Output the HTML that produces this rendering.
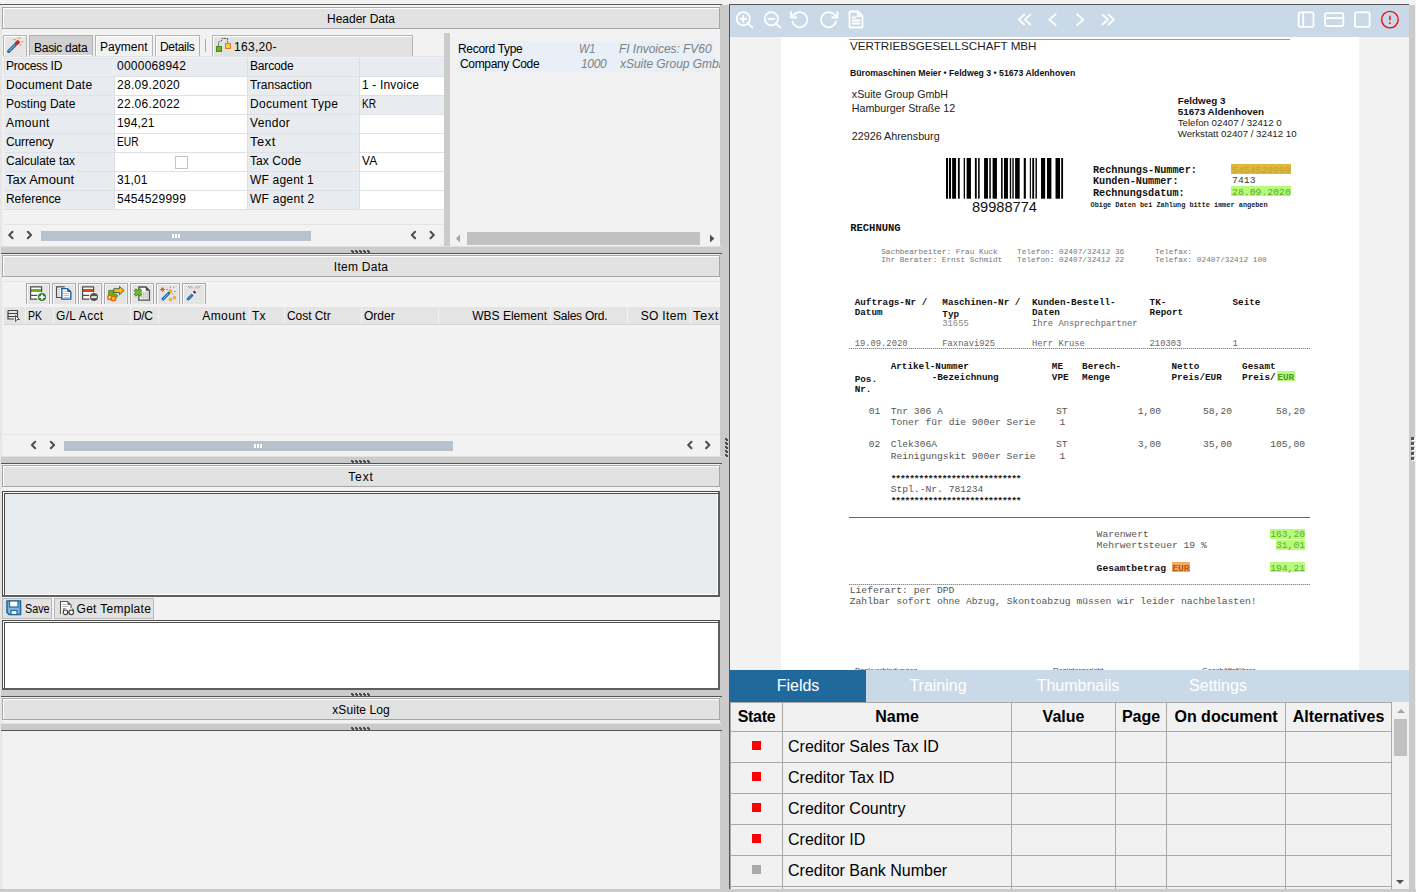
<!DOCTYPE html>
<html><head><meta charset="utf-8">
<style>
*{box-sizing:border-box;margin:0;padding:0}
html,body{width:1416px;height:892px;overflow:hidden;background:#f2f2f2;font-family:"Liberation Sans",sans-serif;font-size:12px;color:#000}
.a{position:absolute}
.t{position:absolute;white-space:pre;line-height:14px;height:14px;letter-spacing:.2px}
.hdr{position:absolute;left:2px;width:718px;height:22px;background:#e2e2e2;border:1px solid #a6a6a6;box-shadow:inset 1px 1px 0 #fff;text-align:center;line-height:21px;padding-top:1px;letter-spacing:.2px}
.split{position:absolute;left:1px;width:721px;height:8px;background:#cbcbcb;border-bottom:1px solid #555;box-shadow:0 -1px 0 #e0e0e0}
.grip{position:absolute;left:350px;bottom:0;width:20px;height:3px;background:linear-gradient(#555,#555) 0 0/2px 2px no-repeat,linear-gradient(#555,#555) 1px 1px/2px 2px no-repeat;background-size:auto}.grip i{position:absolute;top:0;width:3px;height:3px;background:linear-gradient(#4e4e4e,#4e4e4e) 0 0/2px 2px no-repeat,linear-gradient(#4e4e4e,#4e4e4e) 1px 1px/2px 2px no-repeat}
.tab{position:absolute;top:35px;height:21px;background:#f2f2f2;border:1px solid #b4b4b4;border-bottom:none;box-shadow:inset 1px 1px 0 #fff}
.lc{position:absolute;background:#e8ecf0;height:18px}
.vc{position:absolute;background:#fff;height:18px}
.ch{position:absolute;top:307px;height:17px;background:#e4e4e4;line-height:18px;white-space:pre;letter-spacing:.2px}
.tb{position:absolute;top:283px;width:22px;height:21px;border:1px solid #a9a9a9;border-bottom:none;background:#e4e4e4;box-shadow:inset 1px 1px 0 #fafafa,inset -1px 0 0 #f0f0f0}
.doc{position:absolute;white-space:pre;color:#222}
.mono{font-family:"Liberation Mono",monospace}
.ser{font-family:"Liberation Serif",serif}
.vd{position:absolute;left:725px;width:3px;height:3px;background:linear-gradient(#4e4e4e,#4e4e4e) 0 0/2px 2px no-repeat,linear-gradient(#4e4e4e,#4e4e4e) 1px 1px/2px 2px no-repeat}
.rd{position:absolute;left:681px;width:3px;height:3px;background:#555;box-shadow:1px 1px 0 #fff}
.it{font-style:italic;color:#808080}
.ft{position:absolute;font-size:16px;line-height:18px;white-space:pre}
</style></head><body>
<!-- ===== LEFT PANEL ===== -->
<div class="a" id="left" style="left:0;top:0;width:730px;height:892px;background:#f2f2f2;overflow:hidden">
 <div class="a" style="left:0;top:4px;width:722px;height:1px;background:#5a5a5a"></div>
 <div class="a" style="left:0;top:5px;width:3px;height:884px;background:linear-gradient(90deg,#e6e6e6 0 2px,#eeeeee 2px 3px)"></div>
 <div class="a" style="left:720px;top:5px;width:9px;height:887px;background:#cbcbcb"></div>
 <!-- SECTION: header data -->
 <div class="hdr" style="top:7px;letter-spacing:0">Header Data</div>
 <div class="tab" style="left:3px;width:24px;background:#e6e6e6"></div>
<svg class="a" style="left:4px;top:36px" width="22" height="19" viewBox="4 36 22 19"><path d="M8.700 51.300L15.200 44.800" stroke="#1d5f8f" stroke-width="3.300" stroke-linecap="round"/><path d="M9 51L14.800 45.200" stroke="#7fb0d8" stroke-width="1.100" stroke-linecap="round"/><path d="M15.900 44.100L19 41" stroke="#d4121f" stroke-width="3.500"/><path d="M17.200 42.300l.8-.8" stroke="#f08080" stroke-width="1"/><path d="M13.200 39.600h2.600M18.800 38.700l1.700-1.700M21 41.700h2.200M20.100 43.800l.5 2M17.300 38.600v-.9" stroke="#f5a800" stroke-width="1.200"/></svg>
<div class="tab" style="left:29px;width:64px;background:#d0d0d0;border-color:#b0b0b0;box-shadow:none"></div>
<div class="a" style="left:30px;top:55px;width:62px;height:1px;background:#fff"></div>
<div class="t" style="left:34px;top:41px;letter-spacing:-0.275px;">Basic data</div>
<div class="tab" style="left:95px;width:58px"></div>
<div class="t" style="left:100px;top:40px;letter-spacing:0.049px;">Payment</div>
<div class="tab" style="left:155px;width:45px"></div>
<div class="t" style="left:160px;top:40px;letter-spacing:-0.312px;">Details</div>
<div class="a" style="left:205px;top:39px;width:1px;height:13px;background:#a8a8a8"></div>
<div class="tab" style="left:212px;width:201px;background:#e2e2e2"></div>
<svg class="a" style="left:214px;top:36px" width="20" height="18" viewBox="214 36 20 18"><path d="M218.500 45.500V42.200L222 40.300V38.500H227.500V42.500" fill="none" stroke="#555" stroke-width="1" stroke-dasharray="2 .8"/><rect x="216.500" y="46.500" width="5" height="5" fill="#6cb320" stroke="#3d8a1d"/><rect x="225.500" y="43.500" width="5" height="5" fill="#ffc933" stroke="#e8791c"/></svg>
<div class="t" style="left:234px;top:40px;letter-spacing:0.314px;">163,20-</div>
<div class="a" style="left:3px;top:56px;width:441px;height:1px;background:#e2e2e2"></div>
<div class="lc" style="left:4px;top:58px;width:111px"></div>
<div class="vc" style="left:115px;top:58px;width:132px;background:#e8ecf0"></div>
<div class="lc" style="left:248px;top:58px;width:111px"></div>
<div class="vc" style="left:360px;top:58px;width:84px;background:#e8ecf0"></div>
<div class="t" style="left:6px;top:59px;letter-spacing:-0.259px;">Process ID</div>
<div class="t" style="left:117px;top:59px;letter-spacing:0.245px;">0000068942</div>
<div class="t" style="left:250px;top:59px;letter-spacing:-0.172px;">Barcode</div>
<div class="lc" style="left:4px;top:77px;width:111px"></div>
<div class="vc" style="left:115px;top:77px;width:132px;background:#fff"></div>
<div class="lc" style="left:248px;top:77px;width:111px"></div>
<div class="vc" style="left:360px;top:77px;width:84px;background:#fff"></div>
<div class="t" style="left:6px;top:78px;letter-spacing:0.225px;">Document Date</div>
<div class="t" style="left:117px;top:78px;letter-spacing:0.304px;">28.09.2020</div>
<div class="t" style="left:250px;top:78px;letter-spacing:-0.023px;">Transaction</div>
<div class="t" style="left:362px;top:78px;letter-spacing:0.167px;">1 - Invoice</div>
<div class="lc" style="left:4px;top:96px;width:111px"></div>
<div class="vc" style="left:115px;top:96px;width:132px;background:#fff"></div>
<div class="lc" style="left:248px;top:96px;width:111px"></div>
<div class="vc" style="left:360px;top:96px;width:84px;background:#e8ecf0"></div>
<div class="t" style="left:6px;top:97px;letter-spacing:0.065px;">Posting Date</div>
<div class="t" style="left:117px;top:97px;letter-spacing:0.304px;">22.06.2022</div>
<div class="t" style="left:250px;top:97px;letter-spacing:0.344px;">Document Type</div>
<div class="t" style="left:362px;top:97px;letter-spacing:0;transform-origin:0 50%;transform:scaleX(0.840);">KR</div>
<div class="lc" style="left:4px;top:115px;width:111px"></div>
<div class="vc" style="left:115px;top:115px;width:132px;background:#fff"></div>
<div class="lc" style="left:248px;top:115px;width:111px"></div>
<div class="vc" style="left:360px;top:115px;width:84px;background:#fff"></div>
<div class="t" style="left:6px;top:116px;letter-spacing:0.39px;">Amount</div>
<div class="t" style="left:117px;top:116px;letter-spacing:0.149px;">194,21</div>
<div class="t" style="left:250px;top:116px;letter-spacing:0.342px;">Vendor</div>
<div class="lc" style="left:4px;top:134px;width:111px"></div>
<div class="vc" style="left:115px;top:134px;width:132px;background:#fff"></div>
<div class="lc" style="left:248px;top:134px;width:111px"></div>
<div class="vc" style="left:360px;top:134px;width:84px;background:#fff"></div>
<div class="t" style="left:6px;top:135px;letter-spacing:-0.123px;">Currency</div>
<div class="t" style="left:117px;top:135px;letter-spacing:0;transform-origin:0 50%;transform:scaleX(0.852);">EUR</div>
<div class="t" style="left:250px;top:135px;letter-spacing:.5px;transform-origin:0 50%;transform:scaleX(1.08);">Text</div>
<div class="lc" style="left:4px;top:153px;width:111px"></div>
<div class="vc" style="left:115px;top:153px;width:132px;background:#fff"></div>
<div class="lc" style="left:248px;top:153px;width:111px"></div>
<div class="vc" style="left:360px;top:153px;width:84px;background:#fff"></div>
<div class="t" style="left:6px;top:154px;letter-spacing:-0.029px;">Calculate tax</div>
<div class="t" style="left:250px;top:154px;letter-spacing:0.075px;">Tax Code</div>
<div class="t" style="left:362px;top:154px;letter-spacing:0.138px;">VA</div>
<div class="lc" style="left:4px;top:172px;width:111px"></div>
<div class="vc" style="left:115px;top:172px;width:132px;background:#fff"></div>
<div class="lc" style="left:248px;top:172px;width:111px"></div>
<div class="vc" style="left:360px;top:172px;width:84px;background:#fff"></div>
<div class="t" style="left:6px;top:173px;letter-spacing:0;transform-origin:0 50%;transform:scaleX(1.086);">Tax Amount</div>
<div class="t" style="left:117px;top:173px;letter-spacing:0.114px;">31,01</div>
<div class="t" style="left:250px;top:173px;letter-spacing:0.187px;">WF agent 1</div>
<div class="lc" style="left:4px;top:191px;width:111px"></div>
<div class="vc" style="left:115px;top:191px;width:132px;background:#fff"></div>
<div class="lc" style="left:248px;top:191px;width:111px"></div>
<div class="vc" style="left:360px;top:191px;width:84px;background:#fff"></div>
<div class="t" style="left:6px;top:192px;letter-spacing:-0.042px;">Reference</div>
<div class="t" style="left:117px;top:192px;letter-spacing:0.245px;">5454529999</div>
<div class="t" style="left:250px;top:192px;letter-spacing:0.247px;">WF agent 2</div>
<div class="a" style="left:4px;top:58px;width:110px;height:18px;border:1px solid #f0f2f4;border-top-color:#dfe3e8;border-left-color:#dfe3e8"></div>
<div class="a" style="left:175px;top:156px;width:13px;height:13px;border:1px solid #c4c4c4;background:#fff"></div>
<div class="a" style="left:114px;top:77px;width:1px;height:132px;background:#dcdfe3"></div>
<div class="a" style="left:247px;top:58px;width:1px;height:151px;background:#dcdfe3"></div>
<div class="a" style="left:359px;top:58px;width:1px;height:151px;background:#dcdfe3"></div>
<div class="a" style="left:4px;top:76px;width:440px;height:1px;background:#dfe1e4"></div>
<div class="a" style="left:4px;top:95px;width:440px;height:1px;background:#dfe1e4"></div>
<div class="a" style="left:4px;top:114px;width:440px;height:1px;background:#dfe1e4"></div>
<div class="a" style="left:4px;top:133px;width:440px;height:1px;background:#dfe1e4"></div>
<div class="a" style="left:4px;top:152px;width:440px;height:1px;background:#dfe1e4"></div>
<div class="a" style="left:4px;top:171px;width:440px;height:1px;background:#dfe1e4"></div>
<div class="a" style="left:4px;top:190px;width:440px;height:1px;background:#dfe1e4"></div>
<div class="a" style="left:4px;top:209px;width:440px;height:1px;background:#dfe1e4"></div>
<div class="a" style="left:3px;top:224px;width:441px;height:1px;background:#e4e4e4"></div>
<div class="a" style="left:41px;top:231px;width:270px;height:10px;background:#b7c2cd"></div>
<div class="a" style="left:172px;top:234px;width:8px;height:4px;background:linear-gradient(90deg,#fff 0 2px,transparent 2px 3px,#fff 3px 5px,transparent 5px 6px,#fff 6px 8px)"></div>
<svg class="a" style="left:4px;top:229px" width="12" height="12" viewBox="4 229 12 12"><path d="M12.50 231.80L9.20 235L12.50 238.20" fill="none" stroke="#505050" stroke-width="2.1" stroke-linecap="round" stroke-linejoin="round"/></svg>
<svg class="a" style="left:23px;top:229px" width="12" height="12" viewBox="23 229 12 12"><path d="M27.80 231.80L31.10 235L27.80 238.20" fill="none" stroke="#505050" stroke-width="2.1" stroke-linecap="round" stroke-linejoin="round"/></svg>
<svg class="a" style="left:407px;top:229px" width="12" height="12" viewBox="407 229 12 12"><path d="M415.10 231.80L411.80 235L415.10 238.20" fill="none" stroke="#505050" stroke-width="2.1" stroke-linecap="round" stroke-linejoin="round"/></svg>
<svg class="a" style="left:426px;top:229px" width="12" height="12" viewBox="426 229 12 12"><path d="M430.50 231.80L433.80 235L430.50 238.20" fill="none" stroke="#505050" stroke-width="2.1" stroke-linecap="round" stroke-linejoin="round"/></svg>
<div class="a" style="left:444px;top:33px;width:6px;height:215px;background:#cbcbcb"></div>
<div class="a" style="left:458px;top:41px;width:256px;height:31px;background:#e8eff7"></div>
<div class="t" style="left:458px;top:42px;letter-spacing:-0.303px;">Record Type</div>
<div class="t" style="left:460px;top:57px;letter-spacing:-0.341px;">Company Code</div>
<div class="t it" style="left:579px;top:42px;letter-spacing:0;transform-origin:0 50%;transform:scaleX(0.906);">W1</div>
<div class="t it" style="left:619px;top:42px;letter-spacing:-0.051px;">FI Invoices: FV60</div>
<div class="t it" style="left:581px;top:57px;letter-spacing:-0.301px;">1000</div>
<div class="t it" style="left:620px;top:57px;width:100px;overflow:hidden;letter-spacing:-.05px">xSuite Group GmbH</div>
<div class="a" style="left:467px;top:232px;width:233px;height:13px;background:#c1c1c1"></div>
<svg class="a" style="left:454px;top:232px" width="264" height="13" viewBox="454 232 264 13"><path d="M456 238.400L460 234.400V242.400z" fill="#a3a3a3"/><path d="M714.400 238.400L710 234.400V242.400z" fill="#505050"/></svg>
 <!-- SECTION: item data -->
 <div class="split" style="top:247px;height:7px"><div class="grip" style="background:none"><i style="left:0"></i><i style="left:4px"></i><i style="left:8px"></i><i style="left:12px"></i><i style="left:16px"></i></div></div>
 <div class="hdr" style="top:255px;letter-spacing:.26px">Item Data</div>
 <div class="a" style="left:3px;top:281px;width:717px;height:1px;background:#e6e6e6"></div>
<div class="tb" style="left:26px;width:24px"></div>
<div class="tb" style="left:52px;width:24px"></div>
<div class="tb" style="left:78px;width:24px"></div>
<div class="tb" style="left:104px;width:24px"></div>
<div class="tb" style="left:130px;width:24px"></div>
<div class="tb" style="left:156px;width:24px"></div>
<div class="tb" style="left:182px;width:24px"></div>
<svg class="a" style="left:24px;top:282px" width="190" height="24" viewBox="24 282 190 24">
<rect x="30.6" y="286.9" width="11" height="12.200" fill="#fff"/><rect x="31" y="289" width="10.500" height="3" fill="#6cb320"/><path d="M42 286.900H30.6V299.100H37.5M30.6 295.300H37.5M41.6 286.900V293" fill="none" stroke="#4d4d4d" stroke-width="1.200"/><circle cx="42" cy="297.100" r="4.800" fill="#fff"/><circle cx="42" cy="297.100" r="4.100" fill="#2e7d32"/><path d="M39.3 297.100h5.400M42 294.400v5.400" stroke="#fff" stroke-width="1.700"/>
<path d="M64.800 286.900H56.600V297.500H61" fill="#fff" stroke="#4d4d4d" stroke-width="1.200"/><path d="M58 289.500h2M58 291.700h2M58 293.900h2M58 296h2" stroke="#aaa" stroke-width=".9"/>
<path d="M61.800 288.600h5.700l3.300 3.300v7.200h-9z" fill="#fff" stroke="#1a5f9a" stroke-width="1.400"/><path d="M67.300 288.400v3.700h3.700z" fill="#1a5f9a"/><path d="M63.500 291.500h3M63.500 293.500h5.500M63.500 295.500h5.500M63.500 297.500h5.500" stroke="#ffc107" stroke-width="1"/>
<rect x="82.6" y="286.9" width="11" height="12.200" fill="#fff"/><rect x="83" y="289" width="10.500" height="3" fill="#d9480f"/><path d="M94 286.900H82.6V299.100H89.5M82.6 295.300H89.5M93.6 286.900V293" fill="none" stroke="#4d4d4d" stroke-width="1.200"/><circle cx="94" cy="297.100" r="4.800" fill="#fff"/><circle cx="94" cy="297.100" r="4.100" fill="#555"/><path d="M91.3 297.100h5.400" stroke="#fff" stroke-width="1.700"/>
<path d="M108.700 290.500h4.500v3.500h3l1.800 1.800l-1.800 1.800h-7.500z" fill="#6cb320" stroke="#3f7d1c" stroke-width=".8"/>
<path d="M113.800 288.700h5.700v-2.300l4.600 4.200l-4.600 4.200v-2.300h-5.700z" fill="#ffc107" stroke="#3d4d5c" stroke-width=".9"/>
<circle cx="110" cy="297.400" r="2.300" fill="#ffd54f" stroke="#e8591c" stroke-width="1.100"/><circle cx="113.500" cy="298.500" r="2.400" fill="#ffc107" stroke="#e8591c" stroke-width="1.200"/>
<path d="M138.900 287h7l3.500 3.500v9.700h-10.500z" fill="#fff" stroke="#4d4d4d" stroke-width="1.300"/><path d="M145.700 286.800v4h4z" fill="#4d4d4d"/>
<path d="M141.500 292.200h6.500v6h-6.500zM143.700 292.200v6M145.900 292.200v6M141.500 294.200h6.500M141.500 296.200h6.500" fill="none" stroke="#bbb" stroke-width=".8"/>
<path d="M134.800 289.500l6.400 6M141.200 289.500l-6.400 6" stroke="#3f7d1c" stroke-width="3.200"/><path d="M135.200 289.900l5.600 5.200M140.800 289.900l-5.600 5.200" stroke="#7cc62a" stroke-width="1.700"/>
<path d="M163 299l5.800-5.800" stroke="#1a6fb0" stroke-width="3" stroke-linecap="round"/><path d="M163.300 298.700l5-5" stroke="#8ab8e0" stroke-width="1"/>
<path d="M169.400 292.200l2-2" stroke="#f08a1c" stroke-width="3.200"/><path d="M169.800 291.800l1.200-1.200" stroke="#ffd21a" stroke-width="1.600"/>
<path d="M160.200 289.500h4.600M162.500 287.200v4.600M160.900 287.900l3.200 3.200M164.100 287.900l-3.200 3.200" stroke="#e8591c" stroke-width=".9"/>
<path d="M170.500 286.300v1.500M173.300 288l1.200-1.200M174 291.500h1.600M166.300 289.500h1.600M172.600 293.500l.5 1.200" stroke="#777" stroke-width=".8"/>
<circle cx="170.500" cy="299.500" r="1.300" fill="#ffd21a" stroke="#f08a1c" stroke-width=".9"/><circle cx="174.500" cy="297.600" r="1.300" fill="#ffd21a" stroke="#f08a1c" stroke-width=".900"/>
<path d="M188.200 299l4.200-4.200" stroke="#1a6fb0" stroke-width="3" stroke-linecap="round"/><path d="M188.500 298.700l3.600-3.600" stroke="#5a9bd0" stroke-width="1"/>
<path d="M192.700 294.200l2.600-2.600" stroke="#fff" stroke-width="3.600"/><path d="M193.700 293l1.600-1.600" stroke="#8c1c13" stroke-width="2.800"/>
<path d="M188 286l2.300 2.300M190.500 286l2.300 2.300M197.500 286l-2.300 2.300M200.300 286l-2.300 2.300" stroke="#777" stroke-width=".8"/>
</svg>
<div class="ch" style="left:4px;width:21px;padding-left:2px;overflow:hidden;letter-spacing:0"></div>
<div class="ch" style="left:26px;width:27px;padding-left:2px;overflow:hidden;letter-spacing:0"><span style="display:inline-block;letter-spacing:0;transform-origin:0 50%;transform:scaleX(0.874);">PK</span></div>
<div class="ch" style="left:54px;width:76px;padding-left:2px;overflow:hidden;letter-spacing:0"><span style="display:inline-block;letter-spacing:0.324px;">G/L Acct</span></div>
<div class="ch" style="left:131px;width:27px;padding-left:2px;overflow:hidden;letter-spacing:0"><span style="display:inline-block;letter-spacing:-0.324px;">D/C</span></div>
<div class="ch" style="left:159px;width:90px;text-align:right;padding-right:3px;overflow:hidden;letter-spacing:0"><span style="display:inline-block;letter-spacing:0.39px;">Amount</span></div>
<div class="ch" style="left:250px;width:34px;padding-left:2px;overflow:hidden;letter-spacing:0"><span style="display:inline-block;letter-spacing:0.078px;">Tx</span></div>
<div class="ch" style="left:285px;width:76px;padding-left:2px;overflow:hidden;letter-spacing:0"><span style="display:inline-block;letter-spacing:-0.052px;">Cost Ctr</span></div>
<div class="ch" style="left:362px;width:76px;padding-left:2px;overflow:hidden;letter-spacing:0"><span style="display:inline-block;letter-spacing:0.002px;">Order</span></div>
<div class="ch" style="left:439px;width:111px;text-align:right;padding-right:3px;overflow:hidden;letter-spacing:0"><span style="display:inline-block;letter-spacing:0.009px;">WBS Element</span></div>
<div class="ch" style="left:551px;width:76px;padding-left:2px;overflow:hidden;letter-spacing:0"><span style="display:inline-block;letter-spacing:-0.23px;">Sales Ord.</span></div>
<div class="ch" style="left:628px;width:62px;text-align:right;padding-right:3px;overflow:hidden;letter-spacing:0"><span style="display:inline-block;letter-spacing:0.326px;">SO Item</span></div>
<div class="ch" style="left:691px;width:29px;padding-left:2px;overflow:hidden;letter-spacing:0"><span style="display:inline-block;letter-spacing:.5px;transform-origin:0 50%;transform:scaleX(1.08);">Text</span></div>
<div class="a" style="left:4px;top:324px;width:716px;height:1px;background:#d6d6d6"></div>
<svg class="a" style="left:7px;top:309px" width="14" height="13" viewBox="0 0 14 13"><path d="M1 1.500h9.500v7M1 1.500v8.500h6M1 4.500h9M1 7.500h7" fill="none" stroke="#444" stroke-width="1.200"/><path d="M8.500 6.500l4 4h-2.500l-1.500 2z" fill="#fff" stroke="#444" stroke-width=".9"/></svg>
<div class="a" style="left:3px;top:434px;width:717px;height:1px;background:#e6e6e6"></div>
<div class="a" style="left:64px;top:441px;width:389px;height:10px;background:#b7c2cd"></div>
<div class="a" style="left:254px;top:444px;width:8px;height:4px;background:linear-gradient(90deg,#fff 0 2px,transparent 2px 3px,#fff 3px 5px,transparent 5px 6px,#fff 6px 8px)"></div>
<svg class="a" style="left:27px;top:439px" width="12" height="12" viewBox="27 439 12 12"><path d="M35.20 441.80L31.90 445L35.20 448.20" fill="none" stroke="#505050" stroke-width="2.1" stroke-linecap="round" stroke-linejoin="round"/></svg>
<svg class="a" style="left:46px;top:439px" width="12" height="12" viewBox="46 439 12 12"><path d="M50.80 441.80L54.10 445L50.80 448.20" fill="none" stroke="#505050" stroke-width="2.1" stroke-linecap="round" stroke-linejoin="round"/></svg>
<svg class="a" style="left:683px;top:439px" width="12" height="12" viewBox="683 439 12 12"><path d="M691.50 441.80L688.20 445L691.50 448.20" fill="none" stroke="#505050" stroke-width="2.1" stroke-linecap="round" stroke-linejoin="round"/></svg>
<svg class="a" style="left:701px;top:439px" width="12" height="12" viewBox="701 439 12 12"><path d="M706.10 441.80L709.40 445L706.10 448.20" fill="none" stroke="#505050" stroke-width="2.1" stroke-linecap="round" stroke-linejoin="round"/></svg>
 <!-- SECTION: text -->
 <div class="split" style="top:457px;height:7px"><div class="grip" style="background:none"><i style="left:0"></i><i style="left:4px"></i><i style="left:8px"></i><i style="left:12px"></i><i style="left:16px"></i></div></div>
 <div class="hdr" style="top:465px;letter-spacing:.9px">Text</div>
 <div class="a" style="left:2px;top:491px;width:718px;height:106px;background:#e8ecef;border:1px solid #4a4a4a;border-right:2px solid #5e5e5e;border-bottom:2px solid #5e5e5e;box-shadow:inset 1px 1px 0 #fff,inset 2px 2px 0 #4a4a4a,inset -1px -1px 0 #fff"></div>
<div class="a" style="left:2px;top:598px;width:50px;height:21px;background:#e2e2e2;border:1px solid #b8b8b8"></div>
<div class="a" style="left:54px;top:598px;width:100px;height:21px;background:#e2e2e2;border:1px solid #b8b8b8"></div>
<svg class="a" style="left:6px;top:600px" width="16" height="16" viewBox="0 0 16 16"><path d="M1 1h13.500v13.500H3L1 12.500z" fill="#8ab3d6" stroke="#1d6aa3" stroke-width="1.600"/><rect x="3.500" y="1" width="8.500" height="6" fill="#fff" stroke="#1d6aa3" stroke-width="1.200"/><rect x="5" y="10.500" width="6" height="4" fill="#fff" stroke="#1d6aa3" stroke-width="1.200"/></svg>
<div class="t" style="left:24.500px;top:602px;letter-spacing:0;transform-origin:0 50%;transform:scaleX(0.899);">Save</div>
<svg class="a" style="left:59px;top:600px" width="16" height="16" viewBox="0 0 16 16"><path d="M1.500 14V1.500h7l3.500 3.500v3" fill="#fff" stroke="#555" stroke-width="1.100"/><path d="M8.500 1.500v3.500h3.500z" fill="#666"/><path d="M3.500 4.500h4M3.500 6.500h6M3.500 8.500h4" stroke="#aaa" stroke-width=".8"/><circle cx="6.500" cy="12.300" r="2.300" fill="#fff" stroke="#444" stroke-width="1.200"/><circle cx="12.300" cy="12.300" r="2.300" fill="#fff" stroke="#444" stroke-width="1.200"/><path d="M8.800 12h1.200M4.200 11l1-2.500M14.600 11l-1-2.500" stroke="#444" stroke-width="1"/></svg>
<div class="t" style="left:76.500px;top:602px;letter-spacing:0.295px;">Get Template</div>
<div class="a" style="left:2px;top:620px;width:718px;height:70px;background:#fff;border:1px solid #4a4a4a;border-right:2px solid #5e5e5e;border-bottom:2px solid #5e5e5e;box-shadow:inset 1px 1px 0 #fff,inset 2px 2px 0 #4a4a4a"></div>
 <div class="split" style="top:690px;height:7px;box-shadow:none"><div class="grip" style="background:none"><i style="left:0"></i><i style="left:4px"></i><i style="left:8px"></i><i style="left:12px"></i><i style="left:16px"></i></div></div>
 <div class="hdr" style="top:698px;letter-spacing:.08px">xSuite Log</div>
 <div class="split" style="top:724px;height:7px"><div class="grip" style="background:none"><i style="left:0"></i><i style="left:4px"></i><i style="left:8px"></i><i style="left:12px"></i><i style="left:16px"></i></div></div>
 <!-- vertical splitter -->
 <div class="a" style="left:729px;top:4px;width:1px;height:885px;background:#555"></div>
 <i class="vd" style="top:438px"></i><i class="vd" style="top:442px"></i><i class="vd" style="top:446px"></i><i class="vd" style="top:450px"></i><i class="vd" style="top:454px"></i>
</div>
<!-- ===== RIGHT PANEL ===== -->
<div class="a" id="right" style="left:730px;top:0;width:686px;height:892px;overflow:hidden">
 <div class="a" style="left:0;top:4px;width:679px;height:1px;background:#555"></div>
 <div class="a" style="left:0;top:5px;width:679px;height:32px;background:#cad9e8"></div>
 <svg class="a" style="left:0;top:5px" width="679" height="32" viewBox="730 5 679 32">
<g fill="none" stroke="#fff" stroke-width="1.8" stroke-linecap="round" stroke-linejoin="round"><circle cx="743.3" cy="18.8" r="6.6"/><path d="M747.9 23.6L752.4 27.5M740.3 18.8h6M743.3 15.800v6"/></g>
<g fill="none" stroke="#fff" stroke-width="1.8" stroke-linecap="round" stroke-linejoin="round"><circle cx="771.3" cy="18.8" r="6.6"/><path d="M775.9 23.6L780.4 27.500M768.3 18.800h6"/></g>
<g fill="none" stroke="#fff" stroke-width="1.8" stroke-linecap="round" stroke-linejoin="round"><path d="M792.4 21.5A7.6 7.6 0 1 0 794.5 14.2L791.2 17.3M791 12.200V17.500H796.300"/></g>
<g fill="none" stroke="#fff" stroke-width="1.8" stroke-linecap="round" stroke-linejoin="round"><path d="M836 21.500A7.600 7.600 0 1 1 833.900 14.200L837.200 17.300M837.400 12.200V17.500H832.100"/></g>
<g fill="none" stroke="#fff" stroke-width="1.8" stroke-linecap="round" stroke-linejoin="round"><path d="M850.500 11.500h7.500l4.500 4.500v10.500a1 1 0 0 1 -1 1h-11a1 1 0 0 1 -1 -1v-14a1 1 0 0 1 1 -1zM857.700 11.700v4.500h4.500M852.500 17.500h3M852.500 20.500h7M852.500 23.500h7"/></g>
<g fill="none" stroke="#fff" stroke-width="1.8" stroke-linecap="round" stroke-linejoin="round" stroke-linecap="butt" stroke-linejoin="miter"><path d="M1024.200 14.700L1018.800 19.600L1024.200 24.500M1030.300 14.700L1024.900 19.600L1030.300 24.500"/><path d="M1055.600 14.200L1049.300 19.600L1055.600 25"/><path d="M1077 14.200L1083.300 19.600L1077 25"/><path d="M1102.500 14.700L1107.900 19.600L1102.500 24.500M1108.600 14.700L1114 19.600L1108.600 24.500"/></g>
<g fill="none" stroke="#fff" stroke-width="1.8" stroke-linecap="round" stroke-linejoin="round"><rect x="1298.700" y="12.300" width="14.800" height="14.600" rx="1.500"/><path d="M1303.200 12.500v14.200"/><rect x="1325.100" y="13.200" width="18.200" height="12.900" rx="1.500"/><path d="M1325.300 18.100h17.800"/><rect x="1355" y="12.300" width="14.600" height="14.600" rx="1.500"/></g>
<circle cx="1389.900" cy="19.600" r="8.300" fill="none" stroke="#f00" stroke-width="1.350"/><path d="M1389.900 15.700v4.600M1389.900 22.200v1.800" stroke="#f00" stroke-width="1.400"/>
</svg>
 <div class="a" id="page" style="left:51px;top:37px;width:578px;height:634px;background:#fff;overflow:hidden">
 <div class="a" style="left:68px;top:2px;width:441px;height:1px;background:#9a9a9a"></div>
<div class="doc " style="left:69.0px;top:1.8px;font-size:11.65px;line-height:13.98px;color:#222;">VERTRIEBSGESELLSCHAFT MBH</div>
<div class="doc " style="left:69.0px;top:31.3px;font-size:8.72px;line-height:10.46px;color:#111;font-weight:bold">Büromaschinen Meier • Feldweg 3 • 51673 Aldenhoven</div>
<div class="doc " style="left:70.8px;top:51.1px;font-size:10.7px;line-height:12.84px;color:#222;">xSuite Group GmbH</div>
<div class="doc " style="left:70.8px;top:64.8px;font-size:10.7px;line-height:12.84px;color:#222;">Hamburger Straße 12</div>
<div class="doc " style="left:70.8px;top:93.1px;font-size:10.75px;line-height:12.9px;color:#222;">22926 Ahrensburg</div>
<div class="doc " style="left:396.7px;top:57.6px;font-size:9.9px;line-height:11.88px;color:#111;font-weight:bold">Feldweg 3</div>
<div class="doc " style="left:396.7px;top:68.8px;font-size:9.9px;line-height:11.88px;color:#111;font-weight:bold">51673 Aldenhoven</div>
<div class="doc " style="left:396.7px;top:80.1px;font-size:9.7px;line-height:11.64px;color:#222;">Telefon 02407 / 32412 0</div>
<div class="doc " style="left:396.7px;top:91.3px;font-size:9.7px;line-height:11.64px;color:#222;">Werkstatt 02407 / 32412 10</div>
<svg class="a" style="left:159px;top:121px" width="130" height="42" viewBox="0 0 130 42"><rect x="5.97" y="0" width="2.11" height="40.7" fill="#000"/><rect x="9.00" y="0" width="2.02" height="40.7" fill="#000"/><rect x="12.12" y="0" width="3.95" height="40.7" fill="#000"/><rect x="17.91" y="0" width="1.84" height="40.7" fill="#000"/><rect x="23.69" y="0" width="1.29" height="40.7" fill="#000"/><rect x="26.63" y="0" width="4.32" height="40.7" fill="#000"/><rect x="34.89" y="0" width="1.84" height="40.7" fill="#000"/><rect x="38.11" y="0" width="1.56" height="40.7" fill="#000"/><rect x="44.08" y="0" width="3.86" height="40.7" fill="#000"/><rect x="49.31" y="0" width="1.47" height="40.7" fill="#000"/><rect x="52.62" y="0" width="4.32" height="40.7" fill="#000"/><rect x="61.07" y="0" width="1.56" height="40.7" fill="#000"/><rect x="64.00" y="0" width="3.95" height="40.7" fill="#000"/><rect x="69.79" y="0" width="1.38" height="40.7" fill="#000"/><rect x="72.36" y="0" width="1.38" height="40.7" fill="#000"/><rect x="75.11" y="0" width="4.59" height="40.7" fill="#000"/><rect x="83.75" y="0" width="2.11" height="40.7" fill="#000"/><rect x="89.81" y="0" width="1.10" height="40.7" fill="#000"/><rect x="92.29" y="0" width="1.84" height="40.7" fill="#000"/><rect x="95.50" y="0" width="1.38" height="40.7" fill="#000"/><rect x="101.01" y="0" width="4.13" height="40.7" fill="#000"/><rect x="106.98" y="0" width="4.41" height="40.7" fill="#000"/><rect x="115.52" y="0" width="4.50" height="40.7" fill="#000"/><rect x="121.21" y="0" width="1.84" height="40.7" fill="#000"/></svg>
<div class="doc " style="left:191.0px;top:161.5px;font-size:14.6px;line-height:17.52px;color:#111;">89988774</div>
<div class="doc mono" style="left:312.0px;top:128.3px;font-size:10.2px;line-height:12.24px;color:#111;font-weight:bold">Rechnungs-Nummer:</div>
<div class="doc mono" style="left:312.0px;top:139.1px;font-size:10.2px;line-height:12.24px;color:#111;font-weight:bold">Kunden-Nummer:</div>
<div class="doc mono" style="left:312.0px;top:150.6px;font-size:10.2px;line-height:12.24px;color:#111;font-weight:bold">Rechnungsdatum:</div>
<div class="a" style="left:450.0px;top:127.0px;width:60.0px;height:10.2px;background:#dfb93d"></div>
<div class="doc mono" style="left:451.0px;top:128.0px;font-size:9.8px;line-height:11.76px;color:#c7a02c;">5454529999</div>
<div class="doc mono" style="left:451.0px;top:138.4px;font-size:9.8px;line-height:11.76px;color:#3a3a3a;">7413</div>
<div class="a" style="left:450.0px;top:149.0px;width:59.7px;height:10.0px;background:#b8fb7c"></div>
<div class="doc mono" style="left:451.0px;top:150.1px;font-size:9.8px;line-height:11.76px;color:#5aa828;">28.09.2020</div>
<div class="doc mono" style="left:309.6px;top:164.4px;font-size:6.87px;line-height:8.24px;color:#222;font-weight:bold">Obige Daten bei Zahlung bitte immer angeben</div>
<div class="doc mono" style="left:69.2px;top:185.2px;font-size:10.5px;line-height:12.6px;color:#111;font-weight:bold">RECHNUNG</div>
<div class="doc mono" style="left:100.2px;top:210.5px;font-size:7.77px;line-height:9.32px;color:#777;">Sachbearbeiter: Frau Kuck</div>
<div class="doc mono" style="left:236.1px;top:210.5px;font-size:7.77px;line-height:9.32px;color:#777;">Telefon: 02407/32412 36</div>
<div class="doc mono" style="left:373.9px;top:210.5px;font-size:7.77px;line-height:9.32px;color:#777;">Telefax:</div>
<div class="doc mono" style="left:100.2px;top:219.3px;font-size:7.77px;line-height:9.32px;color:#777;">Ihr Berater: Ernst Schmidt</div>
<div class="doc mono" style="left:236.1px;top:219.3px;font-size:7.77px;line-height:9.32px;color:#777;">Telefon: 02407/32412 22</div>
<div class="doc mono" style="left:373.9px;top:219.3px;font-size:7.77px;line-height:9.32px;color:#777;">Telefax: 02407/32412 100</div>
<div class="doc mono" style="left:73.7px;top:260.0px;font-size:9.3px;line-height:11.16px;color:#111;font-weight:bold">Auftrags-Nr /</div>
<div class="doc mono" style="left:73.7px;top:269.8px;font-size:9.3px;line-height:11.16px;color:#111;font-weight:bold">Datum</div>
<div class="doc mono" style="left:251.0px;top:260.0px;font-size:9.3px;line-height:11.16px;color:#111;font-weight:bold">Kunden-Bestell-</div>
<div class="doc mono" style="left:251.0px;top:269.8px;font-size:9.3px;line-height:11.16px;color:#111;font-weight:bold">Daten</div>
<div class="doc mono" style="left:368.6px;top:260.0px;font-size:9.3px;line-height:11.16px;color:#111;font-weight:bold">TK-</div>
<div class="doc mono" style="left:368.6px;top:269.8px;font-size:9.3px;line-height:11.16px;color:#111;font-weight:bold">Report</div>
<div class="doc mono" style="left:451.5px;top:260.0px;font-size:9.3px;line-height:11.16px;color:#111;font-weight:bold">Seite</div>
<div class="doc mono" style="left:161.3px;top:260.0px;font-size:9.3px;line-height:11.16px;color:#111;font-weight:bold">Maschinen-Nr /</div>
<div class="doc mono" style="left:161.3px;top:271.5px;font-size:9.3px;line-height:11.16px;color:#111;font-weight:bold">Typ</div>
<div class="doc mono" style="left:161.3px;top:282.1px;font-size:8.8px;line-height:10.56px;color:#888;">31655</div>
<div class="doc mono" style="left:251.0px;top:282.1px;font-size:8.8px;line-height:10.56px;color:#666;">Ihre Ansprechpartner</div>
<div class="doc mono" style="left:73.7px;top:301.5px;font-size:8.8px;line-height:10.56px;color:#666;">19.09.2020</div>
<div class="doc mono" style="left:161.3px;top:301.5px;font-size:8.8px;line-height:10.56px;color:#666;">Faxnavi925</div>
<div class="doc mono" style="left:251.0px;top:301.5px;font-size:8.8px;line-height:10.56px;color:#666;">Herr Kruse</div>
<div class="doc mono" style="left:368.6px;top:301.5px;font-size:8.8px;line-height:10.56px;color:#666;">210303</div>
<div class="doc mono" style="left:451.5px;top:301.5px;font-size:8.8px;line-height:10.56px;color:#666;">1</div>
<div class="a" style="left:68px;top:311px;width:461px;height:1px;background:repeating-linear-gradient(90deg,#8a8a8a 0 1px,#d8d8d8 1px 2px)"></div>
<div class="doc mono" style="left:109.7px;top:323.8px;font-size:9.3px;line-height:11.16px;color:#111;font-weight:bold">Artikel-Nummer</div>
<div class="doc mono" style="left:73.7px;top:336.5px;font-size:9.3px;line-height:11.16px;color:#111;font-weight:bold">Pos.</div>
<div class="doc mono" style="left:150.7px;top:334.7px;font-size:9.3px;line-height:11.16px;color:#111;font-weight:bold">-Bezeichnung</div>
<div class="doc mono" style="left:73.7px;top:347.4px;font-size:9.3px;line-height:11.16px;color:#111;font-weight:bold">Nr.</div>
<div class="doc mono" style="left:270.8px;top:323.8px;font-size:9.3px;line-height:11.16px;color:#111;font-weight:bold">ME</div>
<div class="doc mono" style="left:270.8px;top:334.7px;font-size:9.3px;line-height:11.16px;color:#111;font-weight:bold">VPE</div>
<div class="doc mono" style="left:301.1px;top:323.8px;font-size:9.3px;line-height:11.16px;color:#111;font-weight:bold">Berech-</div>
<div class="doc mono" style="left:301.1px;top:334.7px;font-size:9.3px;line-height:11.16px;color:#111;font-weight:bold">Menge</div>
<div class="doc mono" style="left:390.5px;top:323.8px;font-size:9.3px;line-height:11.16px;color:#111;font-weight:bold">Netto</div>
<div class="doc mono" style="left:390.5px;top:334.7px;font-size:9.3px;line-height:11.16px;color:#111;font-weight:bold">Preis/EUR</div>
<div class="doc mono" style="left:461.1px;top:323.8px;font-size:9.3px;line-height:11.16px;color:#111;font-weight:bold">Gesamt</div>
<div class="doc mono" style="left:461.1px;top:334.7px;font-size:9.3px;line-height:11.16px;color:#111;font-weight:bold">Preis/</div>
<div class="a" style="left:496.0px;top:334.0px;width:18.2px;height:10.0px;background:#b8fb7c"></div>
<div class="doc mono" style="left:496.4px;top:334.7px;font-size:9.3px;line-height:11.16px;color:#4a9a2a;font-weight:bold">EUR</div>
<div class="doc mono" style="left:87.8px;top:369.4px;font-size:9.67px;line-height:11.6px;color:#555;">01</div>
<div class="doc mono" style="left:109.7px;top:369.4px;font-size:9.67px;line-height:11.6px;color:#555;">Tnr 306 A</div>
<div class="doc mono" style="left:275.0px;top:369.4px;font-size:9.67px;line-height:11.6px;color:#555;">ST</div>
<div class="doc mono" style="right:198.0px;top:369.4px;font-size:9.67px;line-height:11.6px;color:#555;">1,00</div>
<div class="doc mono" style="right:127.0px;top:369.4px;font-size:9.67px;line-height:11.6px;color:#555;">58,20</div>
<div class="doc mono" style="right:54.0px;top:369.4px;font-size:9.67px;line-height:11.6px;color:#555;">58,20</div>
<div class="doc mono" style="left:87.8px;top:402.2px;font-size:9.67px;line-height:11.6px;color:#555;">02</div>
<div class="doc mono" style="left:109.7px;top:402.2px;font-size:9.67px;line-height:11.6px;color:#555;">Clek306A</div>
<div class="doc mono" style="left:275.0px;top:402.2px;font-size:9.67px;line-height:11.6px;color:#555;">ST</div>
<div class="doc mono" style="right:198.0px;top:402.2px;font-size:9.67px;line-height:11.6px;color:#555;">3,00</div>
<div class="doc mono" style="right:127.0px;top:402.2px;font-size:9.67px;line-height:11.6px;color:#555;">35,00</div>
<div class="doc mono" style="right:54.0px;top:402.2px;font-size:9.67px;line-height:11.6px;color:#555;">105,00</div>
<div class="doc mono" style="left:109.7px;top:380.0px;font-size:9.67px;line-height:11.6px;color:#555;">Toner für die 900er Serie</div>
<div class="doc mono" style="left:278.5px;top:380.0px;font-size:9.67px;line-height:11.6px;color:#555;">1</div>
<div class="doc mono" style="left:109.7px;top:413.5px;font-size:9.67px;line-height:11.6px;color:#555;">Reinigungskit 900er Serie</div>
<div class="doc mono" style="left:278.5px;top:413.5px;font-size:9.67px;line-height:11.6px;color:#555;">1</div>
<div class="doc mono" style="left:109.7px;top:437.1px;font-size:9.67px;line-height:11.6px;color:#222;letter-spacing:-1.16px;font-weight:bold">****************************</div>
<div class="doc mono" style="left:109.7px;top:447.4px;font-size:9.67px;line-height:11.6px;color:#555;">Stpl.-Nr. 781234</div>
<div class="doc mono" style="left:109.7px;top:459.0px;font-size:9.67px;line-height:11.6px;color:#222;letter-spacing:-1.16px;font-weight:bold">****************************</div>
<div class="a" style="left:68px;top:480px;width:461px;height:1px;background:#666"></div>
<div class="doc mono" style="left:315.6px;top:491.9px;font-size:9.67px;line-height:11.6px;color:#555;">Warenwert</div>
<div class="doc mono" style="left:315.6px;top:503.2px;font-size:9.67px;line-height:11.6px;color:#555;">Mehrwertsteuer 19 %</div>
<div class="doc mono" style="left:315.6px;top:525.5px;font-size:9.67px;line-height:11.6px;color:#111;font-weight:bold">Gesamtbetrag</div>
<div class="a" style="left:390.8px;top:525.0px;width:18.2px;height:9.8px;background:#f9a862"></div>
<div class="doc mono" style="left:391.2px;top:525.5px;font-size:9.67px;line-height:11.6px;color:#b05a18;font-weight:bold">EUR</div>
<div class="a" style="left:489.0px;top:492.0px;width:35.2px;height:9.6px;background:#b8fb7c"></div>
<div class="doc mono" style="right:54.0px;top:491.9px;font-size:9.67px;line-height:11.6px;color:#62ad2c;">163,20</div>
<div class="a" style="left:494.6px;top:503.1px;width:29.6px;height:9.9px;background:#b8fb7c"></div>
<div class="doc mono" style="right:54.0px;top:503.2px;font-size:9.67px;line-height:11.6px;color:#62ad2c;">31,01</div>
<div class="a" style="left:489.0px;top:525.0px;width:35.2px;height:9.8px;background:#b8fb7c"></div>
<div class="doc mono" style="right:54.0px;top:525.5px;font-size:9.67px;line-height:11.6px;color:#62ad2c;">194,21</div>
<div class="a" style="left:68px;top:547px;width:461px;height:1px;background:repeating-linear-gradient(90deg,#8a8a8a 0 1px,#d8d8d8 1px 2px)"></div>
<div class="doc mono" style="left:68.7px;top:548.1px;font-size:9.7px;line-height:11.64px;color:#555;">Lieferart: per DPD</div>
<div class="doc mono" style="left:68.7px;top:558.8px;font-size:9.7px;line-height:11.64px;color:#555;">Zahlbar sofort ohne Abzug, Skontoabzug müssen wir leider nachbelasten!</div>
<div class="doc " style="left:74.0px;top:628.5px;font-size:7.5px;line-height:9.0px;color:#444;">Bankverbindungen</div>
<div class="doc " style="left:272.0px;top:628.5px;font-size:7.5px;line-height:9.0px;color:#444;">Registergericht</div>
<div class="doc " style="left:421.0px;top:628.5px;font-size:7.5px;line-height:9.0px;color:#444;">Geschäftsführer</div>
 </div>
 <div class="a" style="left:0;top:670px;width:679px;height:32px;background:#cad9e8"></div>
 <div class="a" style="left:0;top:670px;width:136px;height:32px;background:#20699c"></div>
<div class="a" style="left:0px;top:670px;width:136px;height:32px;line-height:31px;text-align:center;font-size:16px;color:#fff">Fields</div>
<div class="a" style="left:140px;top:670px;width:136px;height:32px;line-height:31px;text-align:center;font-size:16px;color:#fff">Training</div>
<div class="a" style="left:280px;top:670px;width:136px;height:32px;line-height:31px;text-align:center;font-size:16px;color:#fff">Thumbnails</div>
<div class="a" style="left:420px;top:670px;width:136px;height:32px;line-height:31px;text-align:center;font-size:16px;color:#fff">Settings</div>
<div class="a" style="left:0;top:702px;width:662px;height:187px;background:#f1f1f1"></div>
<div class="a" style="left:0;top:702px;width:662px;height:1px;background:#a9a9a9"></div>
<div class="a" style="left:0;top:731px;width:662px;height:1px;background:#a9a9a9"></div>
<div class="a" style="left:0;top:762px;width:662px;height:1px;background:#a9a9a9"></div>
<div class="a" style="left:0;top:793px;width:662px;height:1px;background:#a9a9a9"></div>
<div class="a" style="left:0;top:824px;width:662px;height:1px;background:#a9a9a9"></div>
<div class="a" style="left:0;top:855px;width:662px;height:1px;background:#a9a9a9"></div>
<div class="a" style="left:0;top:886px;width:662px;height:1px;background:#a9a9a9"></div>
<div class="a" style="left:0px;top:702px;width:1px;height:187px;background:#a9a9a9"></div>
<div class="a" style="left:52px;top:702px;width:1px;height:187px;background:#a9a9a9"></div>
<div class="a" style="left:281px;top:702px;width:1px;height:187px;background:#a9a9a9"></div>
<div class="a" style="left:385px;top:702px;width:1px;height:187px;background:#a9a9a9"></div>
<div class="a" style="left:436px;top:702px;width:1px;height:187px;background:#a9a9a9"></div>
<div class="a" style="left:555px;top:702px;width:1px;height:187px;background:#a9a9a9"></div>
<div class="a" style="left:661px;top:702px;width:1px;height:187px;background:#a9a9a9"></div>
<div class="a" style="left:1px;top:703px;width:51px;height:28px;line-height:27px;text-align:center;font-size:16px;font-weight:bold;white-space:pre;letter-spacing:-0.3px">State</div>
<div class="a" style="left:53px;top:703px;width:228px;height:28px;line-height:27px;text-align:center;font-size:16px;font-weight:bold;white-space:pre;letter-spacing:0px">Name</div>
<div class="a" style="left:282px;top:703px;width:103px;height:28px;line-height:27px;text-align:center;font-size:16px;font-weight:bold;white-space:pre;letter-spacing:0px">Value</div>
<div class="a" style="left:386px;top:703px;width:50px;height:28px;line-height:27px;text-align:center;font-size:16px;font-weight:bold;white-space:pre;letter-spacing:0px">Page</div>
<div class="a" style="left:437px;top:703px;width:118px;height:28px;line-height:27px;text-align:center;font-size:16px;font-weight:bold;white-space:pre;letter-spacing:0px">On document</div>
<div class="a" style="left:556px;top:703px;width:105px;height:28px;line-height:27px;text-align:center;font-size:16px;font-weight:bold;white-space:pre;letter-spacing:0px">Alternatives</div>
<div class="a" style="left:22px;top:741px;width:9px;height:9px;background:#f00"></div>
<div class="ft" style="left:58px;top:738px">Creditor Sales Tax ID</div>
<div class="a" style="left:22px;top:772px;width:9px;height:9px;background:#f00"></div>
<div class="ft" style="left:58px;top:769px">Creditor Tax ID</div>
<div class="a" style="left:22px;top:803px;width:9px;height:9px;background:#f00"></div>
<div class="ft" style="left:58px;top:800px">Creditor Country</div>
<div class="a" style="left:22px;top:834px;width:9px;height:9px;background:#f00"></div>
<div class="ft" style="left:58px;top:831px">Creditor ID</div>
<div class="a" style="left:22px;top:865px;width:9px;height:9px;background:#a9a9a9"></div>
<div class="ft" style="left:58px;top:862px">Creditor Bank Number</div>
<div class="a" style="left:662px;top:702px;width:17px;height:187px;background:#f1f1f1"></div>
<div class="a" style="left:664px;top:719px;width:13px;height:37px;background:#c1c1c1"></div>
<div class="a" style="left:666.5px;top:709px;border:4px solid transparent;border-bottom:4px solid #a3a3a3;border-top:0"></div>
<div class="a" style="left:666px;top:880px;border:4px solid transparent;border-top:4px solid #505050;border-bottom:0"></div>
 <!--FIELDS-->
 <div class="a" style="left:679px;top:5px;width:6px;height:887px;background:#cbcbcb"></div>
 <div class="a" style="left:685px;top:0;width:1px;height:892px;background:#f2f2f2"></div>
 <i class="rd" style="top:437px"></i><i class="rd" style="top:442px"></i><i class="rd" style="top:447px"></i><i class="rd" style="top:452px"></i><i class="rd" style="top:457px"></i>
</div>
<div class="a" style="left:0;top:889px;width:1416px;height:3px;background:#cbcbcb"></div>
</body></html>
